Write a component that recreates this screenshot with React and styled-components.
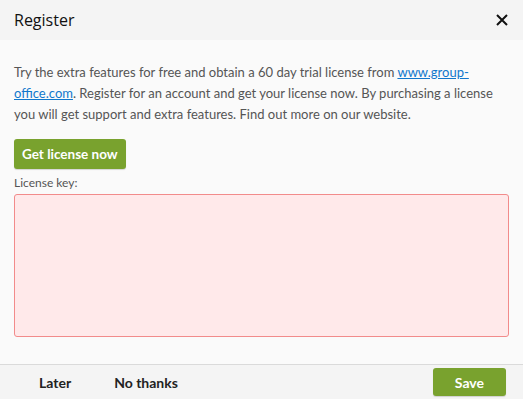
import React from "react"
import styled, { createGlobalStyle } from "styled-components"

const Global = createGlobalStyle`
  html, body {
    margin: 0;
    padding: 0;
    background: #fafafa;
  }
  body {
    font-family: Lato, "Open Sans", sans-serif;
  }
`

const Dialog = styled.div`
  width: 523px;
  height: 399px;
  display: flex;
  flex-direction: column;
  background: #fafafa;
  overflow: hidden;
`

const Header = styled.header`
  height: 40px;
  flex: none;
  background: #f4f4f4;
  display: flex;
  align-items: center;
  justify-content: space-between;
  padding: 0 15px 0 14px;
  box-sizing: border-box;
  h2 {
    margin: 0;
    font-family: "Open Sans", sans-serif;
    font-weight: 400;
    font-size: 16px;
    color: #111;
  }
`

const Close = styled.button`
  border: 0;
  background: none;
  padding: 0;
  width: 13px;
  height: 13px;
  display: flex;
  align-items: center;
  justify-content: center;
  cursor: pointer;
`

const Body = styled.div`
  flex: 1;
  padding: 22px 14px 0 14px;
  display: flex;
  flex-direction: column;
  align-items: flex-start;
  p {
    margin: 0 0 14px;
    font-size: 13px;
    line-height: 21px;
    color: #555;
  }
  a {
    color: #1177cc;
  }
`

const GreenButton = styled.button`
  background: #79a22e;
  color: #fff;
  border: 0;
  border-radius: 3px;
  font-family: Lato, sans-serif;
  font-weight: 700;
  font-size: ${p => p.$size || 13.5}px;
  height: ${p => p.$h || 30}px;
  padding: 0 ${p => p.$pad || 8}px;
  box-shadow: 0 1px 1px rgba(0, 0, 0, 0.15);
  cursor: pointer;
`

const Label = styled.label`
  font-size: 12px;
  line-height: 15px;
  color: #555;
  margin: 6px 0 4px;
`

const KeyInput = styled.textarea`
  width: 100%;
  height: 143px;
  box-sizing: border-box;
  background: #ffe9ea;
  border: 1px solid #f28b8b;
  border-radius: 3px;
  resize: none;
  outline: none;
  font-family: Lato, sans-serif;
`

const Footer = styled.footer`
  height: 35px;
  flex: none;
  background: #f4f4f4;
  border-top: 1px solid #dadada;
  display: flex;
  align-items: center;
  padding: 0 17px 0 25px;
  box-sizing: border-box;
`

const TextButton = styled.button`
  border: 0;
  background: none;
  font-family: Lato, sans-serif;
  font-weight: 700;
  font-size: 14px;
  color: #222;
  padding: 0 14px;
  margin-right: 15px;
  cursor: pointer;
`

const Spacer = styled.div`
  flex: 1;
`

export default function App() {
  return (
    <>
      <Global />
      <Dialog>
        <Header>
          <h2>Register</h2>
          <Close aria-label="Close">
            <svg width="12" height="12" viewBox="0 0 12 12">
              <path d="M1 1 L11 11 M11 1 L1 11" stroke="#111" strokeWidth="2" fill="none" />
            </svg>
          </Close>
        </Header>
        <Body>
          <p>
            Try the extra features for free and obtain a 60 day trial license from{" "}
            <a href="#">www.group-office.com</a>. Register for an account and get your license
            now. By purchasing a license you will get support and extra features. Find out more on
            our website.
          </p>
          <GreenButton>Get license now</GreenButton>
          <Label htmlFor="key">License key:</Label>
          <KeyInput id="key" />
        </Body>
        <Footer>
          <TextButton>Later</TextButton>
          <TextButton>No thanks</TextButton>
          <Spacer />
          <GreenButton $h={28} $pad={22} $size={14}>Save</GreenButton>
        </Footer>
      </Dialog>
    </>
  )
}
